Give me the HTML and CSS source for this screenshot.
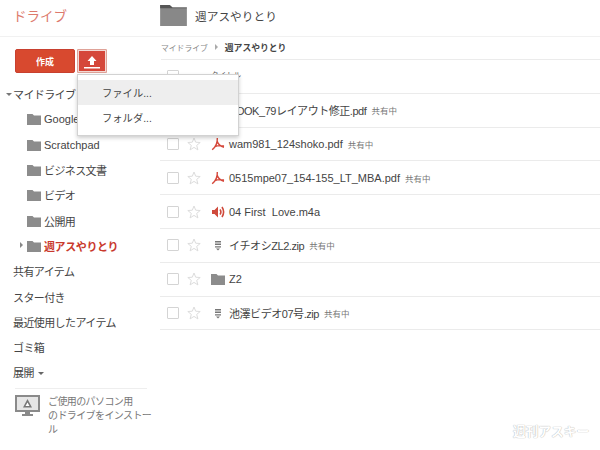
FILE: index.html
```html
<!DOCTYPE html>
<html lang="ja">
<head>
<meta charset="utf-8">
<title>ドライブ</title>
<link rel="stylesheet" href="styles.css">
</head>
<body>
<svg class="defs" width="0" height="0" aria-hidden="true">
  <defs>
    <symbol id="folder" viewBox="0 0 14 12"><path d="M0 1 H5.5 L7 2.6 H14 V12 H0 Z" fill="#8c8c8c"/></symbol>
    <symbol id="bigfolder" viewBox="0 0 28 22"><path d="M0 0 H10 L13 2.5 H28 V22 H0 Z" fill="#888"/><path d="M0 0 H10 L13 2.5 H28 V3.5 H0 Z" fill="#555"/></symbol>
    <symbol id="pdf" viewBox="0 0 14 14"><path d="M6.3 1 C6.6 6 4.5 10 1.2 12.8 M6.3 4.5 C7.3 7.5 10 9.5 13 10.3 M3.5 10 C6 8.6 9.5 8.4 13 9" fill="none" stroke="#d5473a" stroke-width="1.4"/></symbol>
    <symbol id="audio" viewBox="0 0 14 14"><path d="M1 5 H3.5 L7 1.5 V12.5 L3.5 9 H1 Z" fill="#cf4a3c"/><path d="M9 4.5 Q10.8 7 9 9.5 M11 2 Q14.2 7 11 12" fill="none" stroke="#cf4a3c" stroke-width="1.6"/></symbol>
    <symbol id="zip" viewBox="0 0 14 14"><path d="M4 3 H10 V4.4 H4 Z M4 5.6 H10 V7 H4 Z M4 8.2 H10 V9.6 H4 Z M5 10.4 H9 L7 12.4 Z" fill="#777"/></symbol>
    <symbol id="star" viewBox="0 0 14 14"><path d="M7 1 L8.7 5.2 L13.2 5.5 L9.7 8.4 L10.9 12.9 L7 10.4 L3.1 12.9 L4.3 8.4 L0.8 5.5 L5.3 5.2 Z" fill="#fff" stroke="#dcdcdc"/></symbol>
  </defs>
</svg>

<header class="top">
  <div class="brand">ドライブ</div>
  <div class="heading">
    <svg class="heading-folder"><use href="#bigfolder"/></svg>
    <span class="heading-text">週アスやりとり</span>
  </div>
</header>

<div class="page">
  <aside class="side">
    <div class="actions">
      <button class="create">作成</button>
      <button class="upload" aria-label="アップロード">
        <svg width="16" height="13" viewBox="0 0 16 13"><path d="M8 0 L12.5 5 H10 V9 H6 V5 H3.5 Z M0 11 H16 V12.5 H0 Z" fill="#fff"/></svg>
      </button>
    </div>
    <nav class="tree">
      <div class="node root ja"><i class="tri-down"></i>マイドライブ</div>
      <div class="node sub"><svg class="fold"><use href="#folder"/></svg>Google</div>
      <div class="node sub"><svg class="fold"><use href="#folder"/></svg>Scratchpad</div>
      <div class="node sub ja"><svg class="fold"><use href="#folder"/></svg>ビジネス文書</div>
      <div class="node sub ja"><svg class="fold"><use href="#folder"/></svg>ビデオ</div>
      <div class="node sub ja"><svg class="fold"><use href="#folder"/></svg>公開用</div>
      <div class="node sub current ja"><i class="tri-right"></i><svg class="fold"><use href="#folder"/></svg>週アスやりとり</div>
      <div class="node ja">共有アイテム</div>
      <div class="node ja">スター付き</div>
      <div class="node ja">最近使用したアイテム</div>
      <div class="node ja">ゴミ箱</div>
      <div class="node ja">展開<i class="tri-more"></i></div>
    </nav>
    <div class="install">
      <svg class="monitor" width="25" height="22" viewBox="0 0 25 22"><path d="M1 1 H24 V16 H1 Z" fill="#e6e6e6" stroke="#8a8a8a" stroke-width="2"/><path d="M12.5 4 L17 12.5 H8 Z" fill="#777"/><path d="M12.5 7.5 L14.5 11 H10.5 Z" fill="#fff"/><path d="M10 17 H15 V19 H10 Z M7 19 H18 V21 H7 Z" fill="#8a8a8a"/></svg>
      <span class="install-text">ご使用のパソコン用<br>のドライブをインストー<br>ル</span>
    </div>
  </aside>

  <main class="main">
    <div class="crumbs"><span>マイドライブ</span><i class="tri-small"></i><b>週アスやりとり</b></div>
    <div class="row"><span class="check"></span><span class="title-label">タイトル</span></div>
    <div class="row"><span class="check"></span><svg class="star"><use href="#star"/></svg><svg class="type"><use href="#pdf"/></svg><span class="name ja">BOOK_79レイアウト修正.pdf</span><span class="shared">共有中</span></div>
    <div class="row"><span class="check"></span><svg class="star"><use href="#star"/></svg><svg class="type"><use href="#pdf"/></svg><span class="name">wam981_124shoko.pdf</span><span class="shared">共有中</span></div>
    <div class="row"><span class="check"></span><svg class="star"><use href="#star"/></svg><svg class="type"><use href="#pdf"/></svg><span class="name">0515mpe07_154-155_LT_MBA.pdf</span><span class="shared">共有中</span></div>
    <div class="row"><span class="check"></span><svg class="star"><use href="#star"/></svg><svg class="type"><use href="#audio"/></svg><span class="name">04 First&nbsp; Love.m4a</span></div>
    <div class="row"><span class="check"></span><svg class="star"><use href="#star"/></svg><svg class="type"><use href="#zip"/></svg><span class="name ja">イチオシZL2.zip</span><span class="shared">共有中</span></div>
    <div class="row"><span class="check"></span><svg class="star"><use href="#star"/></svg><svg class="type"><use href="#folder"/></svg><span class="name">Z2</span></div>
    <div class="row"><span class="check"></span><svg class="star"><use href="#star"/></svg><svg class="type"><use href="#zip"/></svg><span class="name ja">池澤ビデオ07号.zip</span><span class="shared">共有中</span></div>
  </main>
</div>

<div class="menu">
  <div class="menu-item hover">ファイル...</div>
  <div class="menu-item">フォルダ...</div>
</div>
<div class="mark">週刊アスキー</div>
</body>
</html>
```

FILE: styles.css
```css
* { box-sizing: border-box; }
html, body { margin: 0; height: 100%; }
body {
  width: 600px;
  height: 450px;
  overflow: hidden;
  position: relative;
  background: #fff;
  color: #444;
  font-family: "Liberation Sans", "Noto Sans CJK JP", sans-serif;
  font-size: 11px;
}
.defs { position: absolute; }
.ja { letter-spacing: -.6px; }
.top {
  height: 37px;
  display: flex;
  border-bottom: 1px solid #f1f1f1;
}
.brand {
  width: 160px;
  padding: 6px 0 0 13px;
  font-size: 13.5px;
  line-height: 22px;
  color: #dd7a6d;
}
.heading { display: flex; align-items: center; gap: 8px; padding-bottom: 5px; }
.heading-folder { width: 27px; height: 21px; }
.heading-text { font-size: 11.7px; color: #444; }
.page { display: flex; }
.side { width: 147px; flex: none; margin-right: 13px; }
.actions { display: flex; gap: 2px; padding: 12px 0 0 15px; }
.create {
  width: 60px;
  height: 24px;
  border: 1px solid #c8402f;
  border-radius: 2px;
  background: #d8492f;
  color: #fff;
  font: bold 9px "Liberation Sans", "Noto Sans CJK JP", sans-serif;
  padding: 0;
}
.upload {
  width: 30px;
  height: 24px;
  border: 1px solid #dfa298;
  box-shadow: inset 0 0 0 1px #f3d9d4;
  background: #d5473a;
  padding: 3px 0 0;
  border-radius: 1px;
  display: flex;
  justify-content: center;
  align-items: center;
}
.tree { padding-top: 8.5px; }
.node {
  height: 25.3px;
  display: flex;
  align-items: center;
  padding-left: 13px;
  font-size: 11px;
  color: #444;
  position: relative;
}
.sub { padding-left: 27px; }
.fold { width: 14px; height: 12px; margin-right: 3px; flex: none; }
.current { color: #c9392c; font-weight: bold; letter-spacing: -.4px; }
.tri-down, .tri-right, .tri-more, .tri-small { display: block; width: 0; height: 0; }
.tri-down {
  position: absolute; left: 6px; top: 11px;
  border-left: 3px solid transparent; border-right: 3px solid transparent; border-top: 3px solid #777;
}
.tri-right {
  position: absolute; left: 20px; top: 9px;
  border-top: 3.5px solid transparent; border-bottom: 3.5px solid transparent; border-left: 3.5px solid #888;
}
.tri-more {
  margin: 2px 0 0 4px;
  border-left: 3px solid transparent; border-right: 3px solid transparent; border-top: 3px solid #666;
}
.install {
  margin: 3px 0 0 15px;
  padding-top: 6px;
  border-top: 1px solid #eee;
  display: flex;
  gap: 8px;
  color: #777;
  font-size: 10px;
  letter-spacing: -.6px;
  line-height: 14px;
}
.monitor { flex: none; }
.install-text { white-space: nowrap; }
.main { flex: 1; }
.crumbs {
  height: 23px;
  margin-left: 1px;
  border-bottom: 1px solid #ebebeb;
  display: flex;
  align-items: center;
  gap: 7px;
  font-size: 7.8px;
  color: #888;
  padding-bottom: 2px;
}
.crumbs b { color: #444; font-size: 8.8px; }
.tri-small { border-top: 3px solid transparent; border-bottom: 3px solid transparent; border-left: 3px solid #aaa; }
.row {
  height: 33.8px;
  border-bottom: 1px solid #ebebeb;
  display: flex;
  align-items: center;
  padding-left: 7px;
}
.title-label { margin: 0 0 3px 32px; font-size: 7.5px; color: #555; }
.check {
  width: 12px;
  height: 12px;
  border: 1px solid #d4d4d4;
  border-radius: 1px;
  flex: none;
}
.star { width: 14px; height: 14px; margin-left: 8px; flex: none; }
.type { width: 14px; height: 14px; margin-left: 10px; flex: none; }
.name { margin-left: 4px; font-size: 11px; color: #444; }
.name.ja { letter-spacing: -.45px; }
.shared { margin-left: 5px; font-size: 8.5px; color: #777; }
.menu {
  position: absolute;
  left: 77px;
  top: 74px;
  width: 162px;
  height: 62px;
  background: #fff;
  border: 1px solid #d2d2d2;
  box-shadow: 0 2px 4px rgba(0,0,0,.2);
  padding-top: 5px;
}
.menu-item {
  height: 25px;
  padding-left: 24px;
  display: flex;
  align-items: center;
  font-size: 10.3px;
  color: #444;
}
.hover { background: #eee; }
.mark {
  position: absolute;
  left: 513px;
  top: 421px;
  font-size: 12.7px;
  font-weight: bold;
  color: #fff;
  text-shadow: 0 0 1px #bbb, 0 0 1px #bbb;
}
```
